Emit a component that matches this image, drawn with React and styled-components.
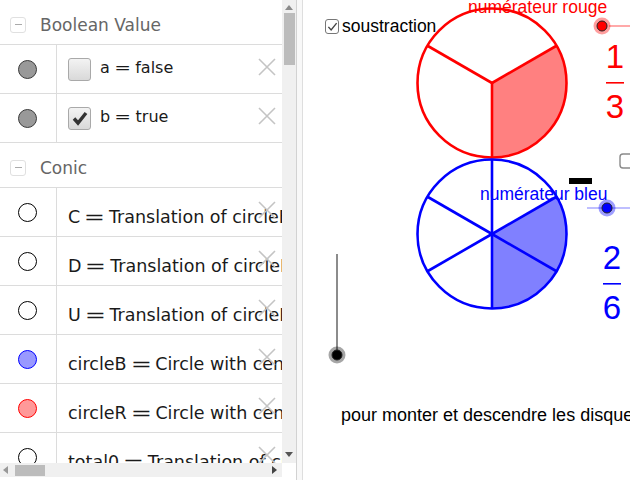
import React from 'react';
import styled, { createGlobalStyle } from 'styled-components';

const GlobalStyle = createGlobalStyle`
  html, body {
    margin: 0;
    padding: 0;
    background: #fff;
  }
  body {
    width: 630px;
    height: 480px;
    overflow: hidden;
    font-family: "DejaVu Sans", sans-serif;
  }
`;

const Page = styled.div`
  display: flex;
  width: 630px;
  height: 480px;
  overflow: hidden;
`;

/* ---------- algebra view ---------- */

const AlgebraPane = styled.div`
  display: grid;
  grid-template-columns: 282px 14px;
  grid-template-rows: 463px 14px;
  align-content: start;
`;

const List = styled.div`
  display: flex;
  flex-direction: column;
  overflow: hidden;
`;

const GroupHeader = styled.div`
  display: flex;
  align-items: center;
  gap: 14px;
  box-sizing: border-box;
  height: 45px;
  padding: 5px 0 0 10px;
  border-bottom: 1px solid #dcdcdc;
  color: #666;
  font-size: 17px;
  flex-shrink: 0;
`;

const Collapse = styled.span`
  display: flex;
  align-items: center;
  justify-content: center;
  box-sizing: border-box;
  width: 16px;
  height: 16px;
  border: 1px solid #e0e0e0;
  border-radius: 3px;

  &::before {
    content: '';
    width: 7px;
    height: 1px;
    background: #aaa;
  }
`;

const Row = styled.div`
  position: relative;
  display: grid;
  grid-template-columns: 57px 1fr;
  box-sizing: border-box;
  height: 49px;
  border-bottom: 1px solid #dcdcdc;
  flex-shrink: 0;
`;

const MarbleCell = styled.div`
  display: flex;
  align-items: center;
  justify-content: center;
  border-right: 1px solid #dcdcdc;
  padding-right: 1px;
`;

const Marble = styled.span`
  box-sizing: border-box;
  width: 19px;
  height: 19px;
  border-radius: 50%;
  background: ${(p) => p.$fill};
  border: 1px solid ${(p) => p.$stroke};
`;

const Content = styled.div`
  display: flex;
  align-items: center;
  gap: 9px;
  box-sizing: border-box;
  padding: ${(p) => (p.$low ? '10px 0 0 11px' : '0 0 3px 11px')};
  white-space: nowrap;
  overflow: hidden;
  color: #1a1a1a;
  font-size: ${(p) => (p.$low ? '17.5px' : '16px')};
`;

const Eq = styled.span`
  display: inline-block;
  margin: 0 ${(p) => p.$gap}px;
  transform: scaleX(${(p) => p.$stretch});
`;

const BoolBox = styled.span`
  display: flex;
  align-items: center;
  justify-content: center;
  box-sizing: border-box;
  width: 23px;
  height: 23px;
  flex-shrink: 0;
  margin-top: 3px;
  border: 1px solid #a9a9a9;
  border-radius: 3px;
  background: linear-gradient(#f3f3f3, #d9d9d9);
`;

const Remove = styled.svg`
  position: absolute;
  left: 258px;
  top: 13px;
  width: 18px;
  height: 18px;
`;

const VScroll = styled.div`
  display: flex;
  flex-direction: column;
  align-items: center;
  background: #f0f0f0;
`;

const HScroll = styled.div`
  display: flex;
  align-items: center;
  background: #f0f0f0;
`;

const Corner = styled.div`
  background: #fff;
`;

const Thumb = styled.div`
  background: #bcbcbc;
  width: ${(p) => p.$w}px;
  height: ${(p) => p.$h}px;
  margin: ${(p) => p.$m};
`;

const Arrow = styled.span`
  width: 0;
  height: 0;
  border: 4px solid transparent;
  ${(p) => p.$dir === 'up' && 'border-bottom: 5px solid #8a8a8a; border-top-width: 0; margin-top: 5px;'}
  ${(p) => p.$dir === 'down' && 'border-top: 5px solid #555; border-bottom-width: 0; margin: auto 0 6px;'}
  ${(p) => p.$dir === 'left' && 'border-right: 5px solid #999; border-left-width: 0; margin-left: 3px;'}
  ${(p) => p.$dir === 'right' && 'border-left: 5px solid #444; border-right-width: 0; margin: 0 5px 0 auto;'}
`;

const Splitter = styled.div`
  box-sizing: border-box;
  width: 7px;
  flex-shrink: 0;
  background: #f8f8f8;
  border-left: 1px solid #d2d2d2;
  border-right: 1px solid #dedede;
`;

/* ---------- graphics view ---------- */

const Graphics = styled.div`
  position: relative;
  flex: 1;
  background: #fff;
  overflow: hidden;
`;

const Canvas = styled.svg`
  position: absolute;
  left: 0;
  top: 0;
  font-family: "Liberation Sans", Arial, sans-serif;
`;

const ToggleWidget = styled.label`
  position: absolute;
  left: 22px;
  top: 19px;
  display: flex;
  align-items: center;
  gap: 3px;
  font-family: "Liberation Sans", Arial, sans-serif;
  font-size: 17.5px;
  line-height: 15px;
  color: #000;
`;

const ToggleBox = styled.span`
  display: flex;
  align-items: center;
  justify-content: center;
  box-sizing: border-box;
  width: 14px;
  height: 15px;
  border: 1.5px solid #777;
  border-radius: 3px;
  background: #fff;
`;

const Cross = () => (
  <Remove viewBox="0 0 18 18">
    <path d="M1 1 L17 17 M17 1 L1 17" stroke="#c4c4c4" strokeWidth="1.6" fill="none" />
  </Remove>
);

const Tick = ({ size = 16, color = '#333', width = 3.4 }) => (
  <svg width={size} height={size} viewBox="0 0 16 16">
    <path d="M2 8.5 L6 13 L14 3" stroke={color} strokeWidth={width} fill="none" strokeLinejoin="miter" />
  </svg>
);

const boolRows = [
  { name: 'a', value: 'false', checked: false },
  { name: 'b', value: 'true', checked: true },
];

const conicRows = [
  { name: 'C', value: 'Translation of circleB', fill: '#fff', stroke: '#000' },
  { name: 'D', value: 'Translation of circleB', fill: '#fff', stroke: '#000' },
  { name: 'U', value: 'Translation of circleB', fill: '#fff', stroke: '#000' },
  { name: 'circleB', value: 'Circle with center', fill: '#9999ff', stroke: '#0000ff' },
  { name: 'circleR', value: 'Circle with center', fill: '#ff9999', stroke: '#ff0000' },
  { name: 'total0', value: 'Translation of circle', fill: '#fff', stroke: '#000' },
];

const Dot = ({ x, y, color, halo }) => (
  <g>
    <circle cx={x} cy={y} r="8.5" fill={halo} />
    <circle cx={x} cy={y} r="5" fill={color} stroke="#222" strokeWidth="1" />
  </g>
);

const r = 74.5;
const pt = (cx, cy, deg) => [cx + r * Math.cos((deg * Math.PI) / 180), cy + r * Math.sin((deg * Math.PI) / 180)];

const Disc = ({ cx, cy, parts, from, to, color, fill }) => {
  const a = pt(cx, cy, from);
  const b = pt(cx, cy, to);
  const large = to - from > 180 ? 1 : 0;
  const spokes = Array.from({ length: parts }, (_, i) => pt(cx, cy, 90 + (360 / parts) * i));
  return (
    <g>
      <circle cx={cx} cy={cy} r={r} fill="#fff" />
      <path d={`M${cx} ${cy} L${a[0]} ${a[1]} A${r} ${r} 0 ${large} 1 ${b[0]} ${b[1]} Z`} fill={fill} />
      {spokes.map(([x, y], i) => (
        <line key={i} x1={cx} y1={cy} x2={x} y2={y} stroke={color} strokeWidth="2.6" />
      ))}
      <circle cx={cx} cy={cy} r={r} fill="none" stroke={color} strokeWidth="2.6" />
    </g>
  );
};

const Fraction = ({ x, top, num, den, color }) => (
  <g fill={color} fontSize="33" textAnchor="middle">
    <text x={x} y={top + 23}>{num}</text>
    <rect x={x - 9} y={top + 37} width="18" height="1.6" />
    <text x={x} y={top + 73}>{den}</text>
  </g>
);

const App = () => {
  return (
    <Page>
      <GlobalStyle />
      <AlgebraPane>
        <List>
          <GroupHeader>
            <Collapse />
            Boolean Value
          </GroupHeader>
          {boolRows.map((row) => (
            <Row key={row.name}>
              <MarbleCell>
                <Marble $fill="#999" $stroke="#3a3a3a" />
              </MarbleCell>
              <Content>
                <BoolBox>{row.checked && <Tick />}</BoolBox>
                <span>
                  {row.name}
                  <Eq $gap={6} $stretch={1.25}>=</Eq>
                  {row.value}
                </span>
              </Content>
              <Cross />
            </Row>
          ))}
          <GroupHeader>
            <Collapse />
            Conic
          </GroupHeader>
          {conicRows.map((row) => (
            <Row key={row.name}>
              <MarbleCell>
                <Marble $fill={row.fill} $stroke={row.stroke} />
              </MarbleCell>
              <Content $low>
                <span>
                  {row.name}
                  <Eq $gap={7} $stretch={1.45}>=</Eq>
                  {row.value}
                </span>
              </Content>
              <Cross />
            </Row>
          ))}
        </List>
        <VScroll>
          <Arrow $dir="up" />
          <Thumb $w={11} $h={52} $m="3px 0 0" />
          <Arrow $dir="down" />
        </VScroll>
        <HScroll>
          <Arrow $dir="left" />
          <Thumb $w={30} $h={11} $m="0 0 0 7px" />
          <Arrow $dir="right" />
        </HScroll>
        <Corner />
      </AlgebraPane>
      <Splitter />
      <Graphics>
        <Canvas width="327" height="480" viewBox="303 0 327 480">
          <Disc cx={492} cy={83} parts={3} from={-30} to={90} color="#ff0000" fill="#ff8080" />
          <Disc cx={492} cy={234} parts={6} from={-30} to={90} color="#0000ff" fill="#8080ff" />

          <text x="468" y="13" fontSize="17.5" fill="#ff0000">numérateur rouge</text>
          <line x1="609" y1="26" x2="630" y2="26" stroke="#ff7070" strokeWidth="1.2" />
          <Dot x={602} y={26} color="#ff0000" halo="rgba(255,0,0,0.38)" />
          <Fraction x={615} top={45} num="1" den="3" color="#ff0000" />

          <rect x="620" y="154" width="16" height="14" rx="3" fill="#fff" stroke="#8a8a8a" strokeWidth="1.4" />
          <rect x="569" y="178" width="23" height="6" fill="#000" />
          <text x="480" y="200" fontSize="17.5" fill="#0000ff">numérateur bleu</text>
          <line x1="587" y1="208" x2="630" y2="208" stroke="#8080ff" strokeWidth="1.2" />
          <Dot x={607} y={208} color="#0000ff" halo="rgba(0,0,255,0.38)" />
          <Fraction x={612} top={246} num="2" den="6" color="#0000ff" />

          <line x1="337" y1="254" x2="337" y2="355" stroke="#8c8c8c" strokeWidth="2" />
          <Dot x={337} y={355} color="#000" halo="rgba(0,0,0,0.35)" />

          <text x="341" y="421" fontSize="18" fill="#000">pour monter et descendre les disques</text>
        </Canvas>
        <ToggleWidget>
          <ToggleBox>
            <Tick size={11} color="#444" width={2} />
          </ToggleBox>
          soustraction
        </ToggleWidget>
      </Graphics>
    </Page>
  );
};

export default App;
